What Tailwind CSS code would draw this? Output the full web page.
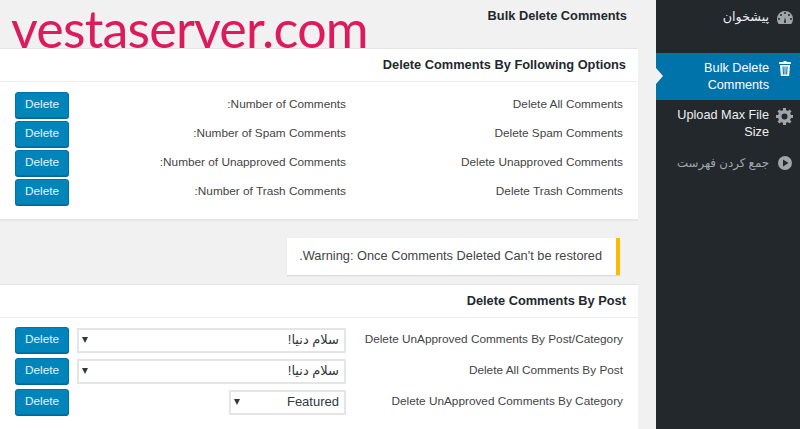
<!DOCTYPE html>
<html lang="fa" dir="rtl">
<head>
    <meta charset="UTF-8">
    <title>Bulk Delete Comments</title>
    <script src="https://cdn.jsdelivr.net/npm/@tailwindcss/browser@4"></script>
</head>
<body class="bg-[#f1f1f1] h-[429px] w-[800px] overflow-hidden relative font-['Liberation_Sans','DejaVu_Sans',sans-serif] text-[11.8px] text-[#444]">
    <div class="flex h-full">
        <!-- Sidebar -->
        <nav class="w-[144px] shrink-0 bg-[#23282d] text-[#eee] text-[12.7px] leading-[16.5px]">
            <a class="flex gap-[6px] pr-[5px] pl-2 pt-[9px] h-[53px]">
                <svg class="w-5 h-5 shrink-0 mt-[-1px]" viewBox="0 0 20 20"><path fill="#a0a5aa" fill-rule="evenodd" d="M3.76 16h12.48A7.97 7.97 0 0 0 18 11a8 8 0 1 0-16 0c0 1.900.66 3.630 1.760 5zM10 4a1 1 0 1 1 0 2 1 1 0 0 1 0-2zM6 6a1 1 0 1 1 0 2 1 1 0 0 1 0-2zm8 0a1 1 0 1 1 0 2 1 1 0 0 1 0-2zM4 10a1 1 0 1 1 0 2 1 1 0 0 1 0-2zm12 0a1 1 0 1 1 0 2 1 1 0 0 1 0-2zm-6-1 1 5a1 1 0 0 1-2 0z"/></svg>
                <span class="leading-4">پیشخوان</span>
            </a>
            <a class="relative flex gap-[6px] pr-[5px] pl-2 pt-[7px] h-[47px] bg-[#0073aa] text-white">
                <svg class="w-5 h-5 shrink-0 mt-[-2px]" viewBox="0 0 20 20"><path fill="#fff" d="M12 4h3c.6 0 1 .4 1 1v1H4V5c0-.6.4-1 1-1h3l1-1h2zM5 7h10l-.8 10c0 .6-.5 1-1.200 1H7c-.7 0-1.200-.4-1.200-1zm2.500 1.500.4 8h1.100l-.4-8zm2 0v8h1v-8zm2 0-.4 8h1.100l.4-8z"/></svg>
                <span>Bulk Delete Comments</span>
            </a>
            <a class="flex gap-[6px] pr-[5px] pl-2 pt-[7px] h-[46px]">
                <svg class="w-5 h-5 shrink-0 mt-[-1px]" viewBox="0 0 20 20"><path fill="#a0a5aa" d="M18 12h-2.180c-.17.7-.44 1.350-.81 1.930l1.540 1.540-2.100 2.100-1.540-1.540c-.58.360-1.230.640-1.910.810V19H8v-2.180c-.68-.170-1.330-.450-1.910-.810l-1.540 1.540-2.120-2.120 1.540-1.540c-.360-.580-.640-1.230-.810-1.910H1V9.030h2.170c.170-.700.440-1.350.810-1.940L2.430 5.550l2.120-2.120L6.100 4.980c.580-.360 1.230-.640 1.900-.810V2h3v2.170c.7.170 1.350.450 1.930.810l1.550-1.550 2.100 2.120-1.530 1.550c.360.590.640 1.240.810 1.930H18zm-8.500 1.500a3 3 0 1 0 0-6 3 3 0 0 0 0 6z"/></svg>
                <span>Upload Max File Size</span>
            </a>
            <a class="flex gap-[6px] pr-[5px] pl-2 pt-[9px]">
                <svg class="w-5 h-5 shrink-0 mt-[-2px]" viewBox="0 0 20 20"><path fill="#a0a5aa" fill-rule="evenodd" d="M10 3a7 7 0 1 0 0 14 7 7 0 0 0 0-14zM8 6.500 13.500 10 8 13.500z"/></svg>
                <span class="text-[11.8px] leading-4 text-[#a0a5aa]">جمع کردن فهرست</span>
            </a>
        </nav>

        <!-- Content -->
        <main class="flex-1 pr-[18px]">
            <h1 class="font-bold text-[12.8px] text-[#23282d] pt-[8px] pr-[11px] leading-[15px] h-[48px]">Bulk Delete Comments</h1>

            <section class="bg-white border border-[#e5e5e5] border-r-0 h-[172px] shadow-[0_1px_1px_rgba(0,0,0,0.04)]">
                <h2 class="font-bold text-[12.8px] text-[#23282d] h-[33px] leading-[31px] pr-3 border-b border-[#eee]">Delete Comments By Following Options</h2>
                <div class="pt-[10px] pr-[15px] pl-[15px] flex flex-col gap-[3px]">
                    <div class="grid grid-cols-[277px_277px_1fr] items-center h-[26px]"><span>Delete All Comments</span><span>Number of Comments:</span><button class="justify-self-end w-[54px] h-[26px] bg-[#0085ba] border border-[#0073aa] rounded-[3px] text-white/90 text-[11.8px] shadow-[0_1px_0_#006799]">Delete</button></div>
                    <div class="grid grid-cols-[277px_277px_1fr] items-center h-[26px]"><span>Delete Spam Comments</span><span>Number of Spam Comments:</span><button class="justify-self-end w-[54px] h-[26px] bg-[#0085ba] border border-[#0073aa] rounded-[3px] text-white/90 text-[11.8px] shadow-[0_1px_0_#006799]">Delete</button></div>
                    <div class="grid grid-cols-[277px_277px_1fr] items-center h-[26px]"><span>Delete Unapproved Comments</span><span>Number of Unapproved Comments:</span><button class="justify-self-end w-[54px] h-[26px] bg-[#0085ba] border border-[#0073aa] rounded-[3px] text-white/90 text-[11.8px] shadow-[0_1px_0_#006799]">Delete</button></div>
                    <div class="grid grid-cols-[277px_277px_1fr] items-center h-[26px]"><span>Delete Trash Comments</span><span>Number of Trash Comments:</span><button class="justify-self-end w-[54px] h-[26px] bg-[#0085ba] border border-[#0073aa] rounded-[3px] text-white/90 text-[11.8px] shadow-[0_1px_0_#006799]">Delete</button></div>
                </div>
            </section>

            <div class="mt-[18px] mr-[18px] w-[333px] h-[37px] bg-white border-r-4 border-[#ffb900] shadow-[0_1px_1px_rgba(0,0,0,0.1)] pr-[14px] leading-[36px] text-[12.8px]">Warning: Once Comments Deleted Can't be restored.</div>

            <section class="mt-[9px] bg-white border border-[#e5e5e5] border-r-0 h-[160px]">
                <h2 class="font-bold text-[12.8px] text-[#23282d] h-[33px] leading-[31px] pr-3 border-b border-[#eee]">Delete Comments By Post</h2>
                <div class="pt-[9px] pr-[15px] pl-[15px] flex flex-col gap-[5px]">
                    <div class="grid grid-cols-[277px_277px_1fr] items-center h-[26px]"><span>Delete UnApproved Comments By Post/Category</span><div class="relative w-[269px] h-[25px]"><select class="appearance-none w-full h-full border-2 border-[#e5e5e5] bg-white pr-[5px] text-[13px] text-[#32373c]"><option>سلام دنیا!</option></select><span class="absolute left-[5px] top-[9px] border-x-[3.5px] border-x-transparent border-t-[6px] border-t-[#32373c]"></span></div><button class="justify-self-end w-[54px] h-[26px] bg-[#0085ba] border border-[#0073aa] rounded-[3px] text-white/90 text-[11.8px] shadow-[0_1px_0_#006799]">Delete</button></div>
                    <div class="grid grid-cols-[277px_277px_1fr] items-center h-[26px]"><span>Delete All Comments By Post</span><div class="relative w-[269px] h-[25px]"><select class="appearance-none w-full h-full border-2 border-[#e5e5e5] bg-white pr-[5px] text-[13px] text-[#32373c]"><option>سلام دنیا!</option></select><span class="absolute left-[5px] top-[9px] border-x-[3.5px] border-x-transparent border-t-[6px] border-t-[#32373c]"></span></div><button class="justify-self-end w-[54px] h-[26px] bg-[#0085ba] border border-[#0073aa] rounded-[3px] text-white/90 text-[11.8px] shadow-[0_1px_0_#006799]">Delete</button></div>
                    <div class="grid grid-cols-[277px_277px_1fr] items-center h-[26px]"><span>Delete UnApproved Comments By Category</span><div class="relative w-[117px] h-[25px]"><select class="appearance-none w-full h-full border-2 border-[#e5e5e5] bg-white pr-[5px] text-[13px] text-[#32373c]"><option>Featured</option></select><span class="absolute left-[5px] top-[9px] border-x-[3.5px] border-x-transparent border-t-[6px] border-t-[#32373c]"></span></div><button class="justify-self-end w-[54px] h-[26px] bg-[#0085ba] border border-[#0073aa] rounded-[3px] text-white/90 text-[11.8px] shadow-[0_1px_0_#006799]">Delete</button></div>
                </div>
            </section>
        </main>
    </div>

    <!-- selected menu pointer -->
    <span class="absolute left-[656px] top-[68px] w-0 h-0 border-y-[8px] border-y-transparent border-l-[7px] border-l-[#f1f1f1]"></span>
    <!-- watermark -->
    <div dir="ltr" class="absolute left-[11px] top-0 text-[52px] leading-[56px] tracking-[-0.8px] text-[#dc1a5c] font-['Lato',sans-serif] whitespace-nowrap">vestaserver.com</div>
</body>
</html>
